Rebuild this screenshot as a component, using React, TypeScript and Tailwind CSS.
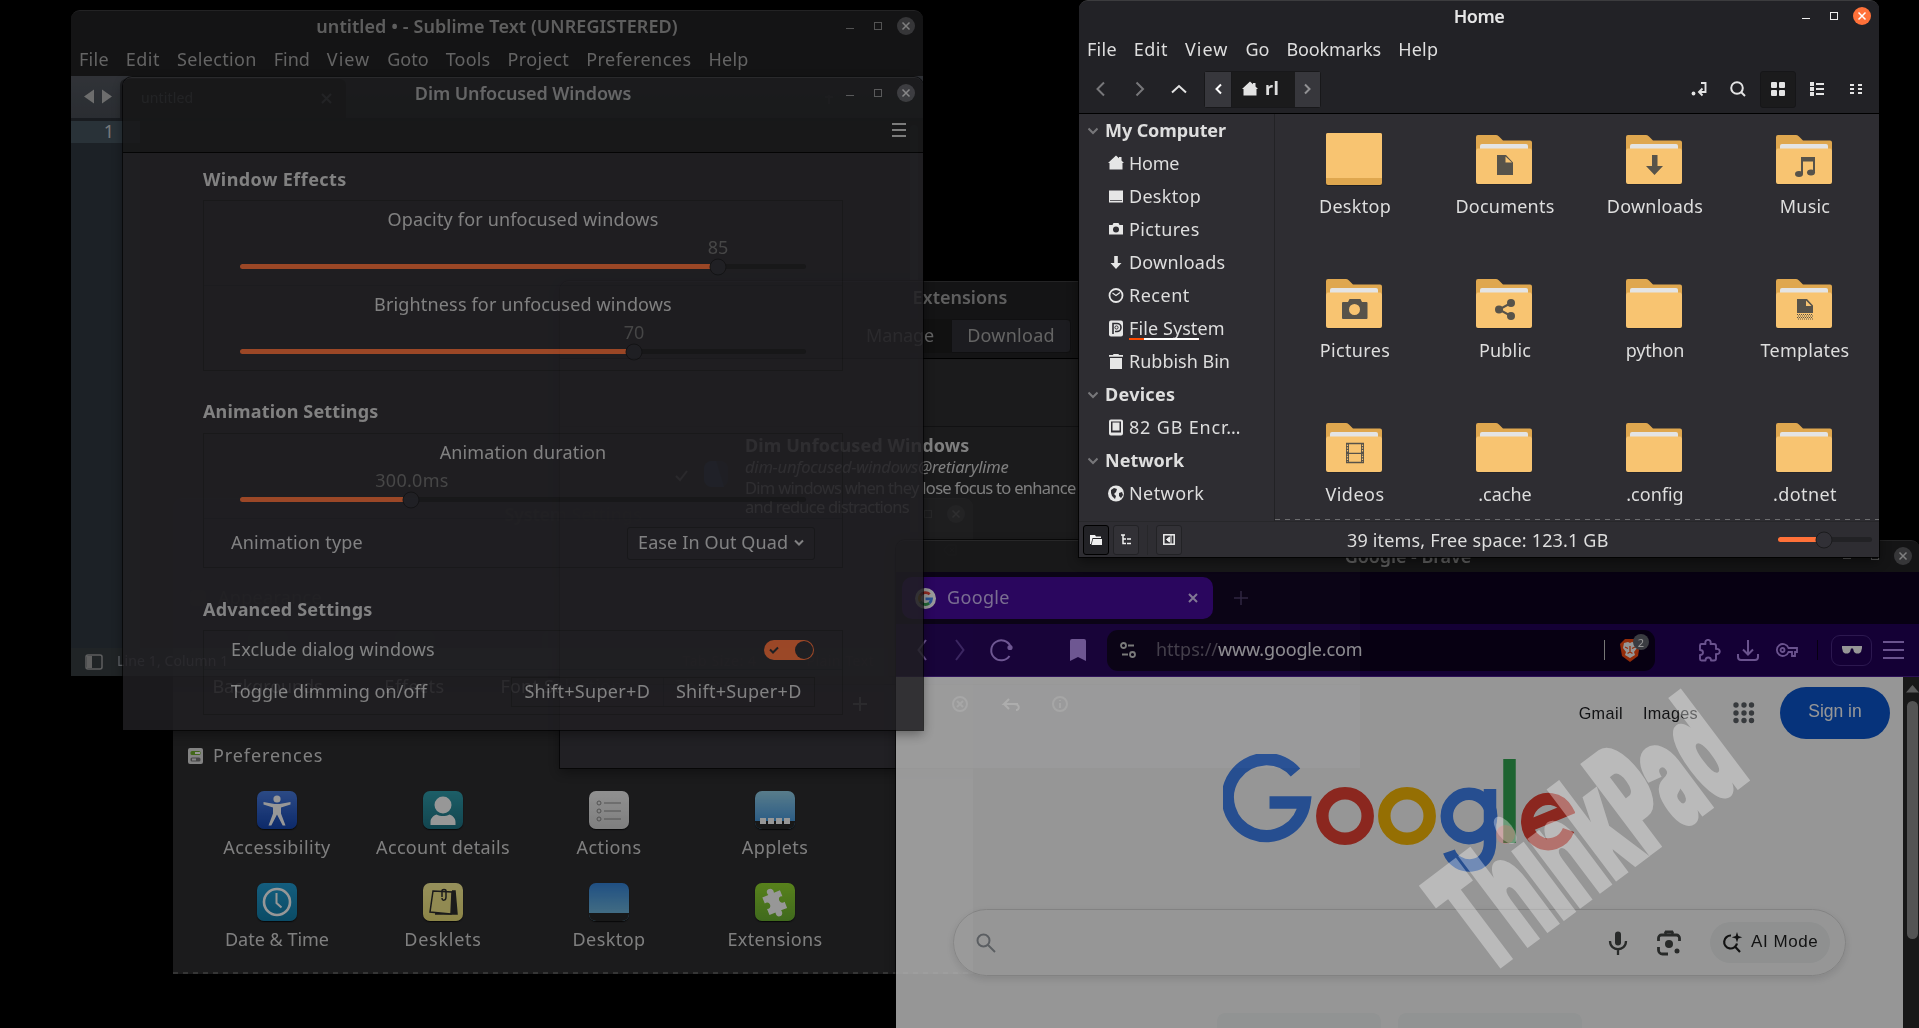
import React, { useLayoutEffect, useRef, useState } from "react";

/* Text that is tracked so that it fills a given width. */
function T({ w, className = "", children }: { w?: number; className?: string; children: string }) {
  const ref = useRef<HTMLSpanElement>(null);
  const [sp, setSp] = useState(0);
  useLayoutEffect(() => {
    if (!ref.current || !w) return;
    const natural = ref.current.offsetWidth;
    setSp((w - natural) / children.length);
  }, [w, children]);
  const lift = className.includes("leading") ? "" : "-translate-y-px ";
  return (
    <span ref={ref} style={{ letterSpacing: sp }} className={"inline-block shrink-0 whitespace-nowrap " + lift + className}>
      {children}
    </span>
  );
}

function TitleBar({ title, w, active = false }: { title: string; w: number; active?: boolean }) {
  return (
    <div className="relative flex h-[33px] shrink-0 items-center justify-center pb-[2px]">
      <T w={w} className={active ? "font-semibold text-[#e6e6e6]" : "font-semibold text-[#a0a0a0]"}>
        {title}
      </T>
      <div className={"absolute right-2 top-[6px] flex gap-[10px] " + (active ? "text-[#eeeeee]" : "text-[#8c8c8c]")}>
        <svg width="18" height="18"><path d="M5 11.5h8" stroke="currentColor" /></svg>
        <svg width="18" height="18"><rect x="5.5" y="5.5" width="7" height="7" fill="none" stroke="currentColor" /></svg>
        <svg width="18" height="18">
          <circle cx="9" cy="9" r="9" className={active ? "fill-[#ff7139]" : "fill-[#5c5c60]"} />
          <path d="M5.5 5.5l7 7M12.500 5.5l-7 7" className={active ? "stroke-white" : "stroke-[#d8d8d8]"} strokeWidth="1.5" />
        </svg>
      </div>
    </div>
  );
}

const frame =
  "absolute flex flex-col overflow-hidden rounded-t-[9px] border-t border-[#3c3c3e] shadow-[0_0_0_1px_rgba(0,0,0,0.8),0_4px_12px_rgba(0,0,0,0.45)] ";
const dim = "opacity-85 brightness-[.7] ";

/* ---------- System settings ---------- */

function Tile({ className, children }: { className: string; children?: React.ReactNode }) {
  return (
    <div className={"flex size-10 items-center justify-center overflow-hidden rounded-[7px] shadow-[0_1px_1px_rgba(0,0,0,0.7)] " + className}>
      {children}
    </div>
  );
}

const prefs: { label: string; w: number; icon: React.ReactNode }[] = [
  {
    label: "Accessibility", w: 108,
    icon: (
      <Tile className="bg-linear-to-b from-[#4a7de0] to-[#1546b2]">
        <svg width="40" height="40" fill="#fff">
          <circle cx="20" cy="9" r="3.6" />
          <path d="M6.500 12l11 2h5l11-2v2.600l-9.500 3v6l4.500 12h-2.800L20 24.500l-5.700 11.100h-2.800l4.500-12v-6l-9.500-3z" />
        </svg>
      </Tile>
    ),
  },
  {
    label: "Account details", w: 134,
    icon: (
      <Tile className="bg-linear-to-b from-[#31a0ae] to-[#1f7485]">
        <svg width="40" height="40" fill="#fff">
          <ellipse cx="20" cy="15" rx="8.500" ry="8.500" />
          <path d="M7.500 35v-3c0-4 3-6.500 6-7.500 4 2 9 2 13 0 3 1 6 3.500 6 7.500v3z" />
        </svg>
      </Tile>
    ),
  },
  {
    label: "Actions", w: 65,
    icon: (
      <Tile className="bg-linear-to-b from-[#f2f2f2] to-[#d6d6d6]">
        <svg width="40" height="40" fill="none" stroke="#8a8a8a">
          <circle cx="10" cy="13" r="2" /><circle cx="10" cy="21" r="2" /><circle cx="10" cy="29" r="2" />
          <path d="M15 13h17M15 21h17M15 29h17" />
        </svg>
      </Tile>
    ),
  },
  {
    label: "Applets", w: 67,
    icon: (
      <Tile className="bg-linear-to-b from-[#95d2ea] via-[#4f9fe0] via-75% to-[#4a96dc]">
        <svg width="40" height="40">
          <path d="M0 31h40v9H0z" fill="#2a2a2a" />
          <path d="M5 28h6v6H5zM13 28h6v6h-6zM21 28h6v6h-6zM29 28h6v6h-6z" fill="#fff" />
        </svg>
      </Tile>
    ),
  },
  {
    label: "Date & Time", w: 104,
    icon: (
      <Tile className="bg-linear-to-b from-[#229ed4] to-[#137fab]">
        <svg width="40" height="40" fill="none" stroke="#fff">
          <circle cx="20" cy="20" r="13" strokeWidth="2.600" /><path d="M19.500 11v10l5 4.500" strokeWidth="2" />
        </svg>
      </Tile>
    ),
  },
  {
    label: "Desklets", w: 77,
    icon: (
      <Tile className="bg-linear-to-b from-[#fdf49a] to-[#ece078]">
        <svg width="40" height="40" fill="none" stroke="#2e2e2e" strokeWidth="1.500">
          <path d="M29 9h3l2 23H12" fill="#2e2e2e" />
          <path d="M10 9l19 1-1 22-21-2z" fill="#f4e98a" /><path d="M19 15V9c0-2 4-2 4 0v6c0 4-4 4-4 1" />
        </svg>
      </Tile>
    ),
  },
  {
    label: "Desktop", w: 73,
    icon: (
      <Tile className="bg-linear-to-b from-[#3686dc] via-[#6cb4dc] via-75% to-[#6cb4dc]">
        <svg width="40" height="40"><path d="M0 31h40v9H0z" fill="#2a2a2a" /></svg>
      </Tile>
    ),
  },
  {
    label: "Extensions", w: 95,
    icon: (
      <Tile className="bg-linear-to-b from-[#94da2e] to-[#6cb232]">
        <svg width="40" height="40" fill="#fff">
          <g transform="rotate(-22 20 20)">
            <path d="M10 11h6.500c-3-7 8-7 6 0H29v6.500c-6-3-6 8 0 6V30h-6.500c2 7-8 7-6 0H10v-6.500c6 2 6-8 0-6z" />
          </g>
        </svg>
      </Tile>
    ),
  },
];

function SettingsWindow() {
  return (
    <div className={frame + dim + "left-[173px] top-[498px] h-[476px] w-[800px] bg-[#2d2d2f] text-[#d6d6d6]"}>
      <div className="flex h-[78px] shrink-0 flex-col bg-[#242427]">
        <TitleBar title="System Settings" w={137} />
        <div className="flex justify-end pr-4 pt-3 text-[#8c8c8c]">
          <svg width="14" height="12" fill="none" stroke="currentColor"><path d="M5 1h8v10H5L1 6zM7 4l4 4M11 4L7 8" /></svg>
        </div>
      </div>
      <div className="flex h-[42px] shrink-0 items-center gap-3 pl-[17px]">
        <div className="size-4 rounded-sm bg-[#444]" />
        <T w={104}>Appearance</T>
      </div>
      <div className="flex h-[112px] shrink-0 pl-[21px] pt-3">
        {[["Backgrounds", 110], ["Effects", 60], ["Font Selection", 122], ["Themes", 66]].map(([l, w]) => (
          <div key={l} className="flex w-[147px] shrink-0 flex-col items-center gap-1">
            <div className="size-10 rounded-[7px] bg-[#3c4044]" />
            <T w={w as number} className="leading-[22px]">{l as string}</T>
          </div>
        ))}
      </div>
      <div className="flex h-[50px] shrink-0 items-center gap-[10px] pl-[15px]">
        <svg width="15" height="16">
          <rect width="15" height="16" rx="2" fill="#dcdcdc" />
          <rect x="2.500" y="3" width="10" height="4" rx="1.500" fill="#6fae2c" /><rect x="7" y="4" width="5" height="2" fill="#fff" />
          <rect x="2.500" y="9.500" width="10" height="4" rx="1.500" fill="#777" /><rect x="4" y="10.500" width="4" height="2" fill="#ddd" />
        </svg>
        <T w={110}>Preferences</T>
      </div>
      <div className="grid grid-cols-[repeat(4,166px)] gap-y-[24px] pl-[21px] pt-[10px]">
        {prefs.map((p) => (
          <div key={p.label} className="flex h-[68px] flex-col items-center">
            {p.icon}
            <T w={p.w} className="mt-[6px] leading-[24px]">{p.label}</T>
          </div>
        ))}
      </div>
      <div className="mt-auto h-[2px] shrink-0 bg-[repeating-linear-gradient(90deg,#5a5a5a_0_5px,transparent_5px_10px)]" />
    </div>
  );
}

/* ---------- Extensions ---------- */

function ExtensionsWindow() {
  return (
    <div className={frame + dim + "left-[560px] top-[281px] h-[487px] w-[800px] bg-[#323137] text-[#d6d6d6]"}>
      <div className="flex h-[77px] shrink-0 flex-col border-b border-black bg-[#222224]">
        <TitleBar title="Extensions" w={95} />
        <div className="flex justify-center pt-[4px] text-[#a8a8a8]">
          <div className="flex h-[34px] w-[102px] items-center justify-center bg-[#1c1c1e]"><T w={68}>Manage</T></div>
          <div className="flex h-[34px] w-[120px] items-center justify-center rounded-r border border-[#1b1b1c] bg-[#313036]"><T w={88}>Download</T></div>
        </div>
      </div>
      <div className="flex h-[326px] shrink-0 flex-col border-b border-[#1d1d20] bg-[#2d2d2f]">
        <div className="h-[68px] shrink-0 border-b border-[#1d1d20]" />
        <div className="flex items-start pl-[114px] pt-[6px]">
          <svg width="16" height="14" className="mt-[36px]" fill="none" stroke="#a0a0a0" strokeWidth="2"><path d="M2 7l4 4 7-9" /></svg>
          <svg width="26" height="26" className="ml-[14px] mt-[28px]">
            <rect width="24" height="26" rx="8" fill="#2c3b50" /><path d="M8 0h4l8 26H8a8 8 0 01-8-8V8a8 8 0 018-8z" fill="#33507a" />
          </svg>
          <div className="ml-[15px] flex w-[420px] flex-col text-[16.500px]">
            <T w={224} className="self-start text-[18px] font-bold leading-[24px]">Dim Unfocused Windows</T>
            <T w={264} className="self-start italic leading-[19px]">dim-unfocused-windows@retiarylime</T>
            <T w={331} className="mt-[2px] self-start leading-[19px]">Dim windows when they lose focus to enhance</T>
            <T w={164} className="self-start leading-[19px]">and reduce distractions</T>
          </div>
        </div>
      </div>
      <div className="flex h-[38px] shrink-0 items-center pl-[290px] text-[#b4b4b4]">
        <svg width="250" height="24" fill="none" stroke="currentColor" strokeWidth="2">
          <path d="M3 12h14M10 5v14" />
          <circle cx="110" cy="12" r="7" /><path d="M107 9l6 6M113 9l-6 6" />
          <path d="M168 12h-14l5-5M154 12l5 5M164 12c6 0 6 6 2 6" stroke="#fff" />
          <circle cx="210" cy="12" r="7" /><path d="M210 8v1M210 11v5" />
        </svg>
      </div>
    </div>
  );
}

/* ---------- Sublime Text ---------- */

const subMenu: [string, number][] = [
  ["File", 30], ["Edit", 34], ["Selection", 80], ["Find", 36], ["View", 43], ["Goto", 41], ["Tools", 45], ["Project", 62], ["Preferences", 105], ["Help", 40],
];

function SublimeWindow() {
  return (
    <div className={frame + dim + "left-[71px] top-[10px] h-[666px] w-[852px] bg-[#222224] text-[#a8a8a8]"}>
      <TitleBar title="untitled • - Sublime Text (UNREGISTERED)" w={361} />
      <div className="flex h-[32px] shrink-0 items-center gap-[17px] pl-2">
        {subMenu.map(([l, w]) => <T key={l} w={w}>{l}</T>)}
      </div>
      <div className="flex h-[42px] shrink-0 bg-linear-to-b from-[#52565e] to-[#484d55]">
        <svg width="49" height="42" fill="#b8b8b8"><path d="M23 13.500v14L13 20.500zM31 13.500v14l10-7z" /></svg>
        <div className="mt-[3px] flex w-[226px] items-center justify-between rounded-t-md bg-[#303236] pl-[21px] pr-[14px] text-[#a6acb4]">
          <T w={52} className="text-[14px]">untitled</T>
          <svg width="11" height="11" stroke="currentColor" strokeWidth="2"><path d="M1 1l9 9M10 1l-9 9" /></svg>
        </div>
        <svg width="12" height="12" className="ml-auto mr-[88px] mt-4" stroke="#6a6e74" strokeWidth="2"><path d="M6 3v9M2 5h8" /></svg>
      </div>
      <div className="flex grow border-t-[3px] border-[#2b3036] bg-[#2f3035]">
        <div className="w-[69px] bg-[#303841]">
          <div className="h-[22px] bg-[#465460] pr-[26px] text-right leading-[21px] text-[#c8ccd0]">1</div>
        </div>
        <div className="ml-auto mr-[5px] mt-1 w-[8px] rounded bg-[#43474c]" />
      </div>
      <div className="flex h-[28px] shrink-0 items-center bg-[#363d42] pl-[14px] text-[14px] text-[#a6acb4]">
        <svg width="18" height="16"><rect x="1" y="1" width="16" height="14" rx="2" fill="none" stroke="#a0a0a0" strokeWidth="1.500" /><path d="M2 2h5v12H2z" fill="#a0a0a0" /></svg>
        <T w={112} className="ml-[14px]">Line 1, Column 1</T>
        <T w={74} className="ml-[454px]">Tab Size: 4</T>
        <T w={68} className="ml-[50px]">Plain Text</T>
      </div>
    </div>
  );
}

/* ---------- Dim Unfocused Windows ---------- */

function Knob({ className }: { className: string }) {
  return <div className={"absolute top-1/2 size-[17px] -translate-x-1/2 -translate-y-1/2 rounded-full border border-[#1b1b1d] bg-[#313036] " + className} />;
}

function SliderRow({ label, w, value, vw, pos, fill, knob }: { label: string; w: number; value: string; vw: number; pos: string; fill: string; knob: string }) {
  return (
    <div className="flex h-[84px] flex-col px-[36px] not-last:h-[85px]">
      <div className="flex h-[38px] items-center justify-center"><T w={w}>{label}</T></div>
      <div className={"flex h-[18px] w-[100px] items-center justify-center text-[#707070] " + pos}><T w={vw}>{value}</T></div>
      <div className="relative flex h-[19px] items-center">
        <div className="h-[5px] w-full rounded-full bg-[#222224]"><div className={"h-full rounded-l-full bg-[#ff7139] " + fill} /></div>
        <Knob className={knob} />
      </div>
    </div>
  );
}

const panel = "flex flex-col divide-y divide-[#29292d] border border-[#242427]";

function DimWindow() {
  return (
    <div className={frame + dim + "left-[123px] top-[77px] h-[653px] w-[800px] bg-[#2e2c32] text-[#d2d2d2]"}>
      <div className="flex h-[75px] shrink-0 flex-col border-b border-black bg-[#222224]">
        <TitleBar title="Dim Unfocused Windows" w={216} />
        <div className="flex justify-end pr-[17px] pt-[12px]">
          <svg width="14" height="14" stroke="#c8c8c8" strokeWidth="2"><path d="M0 1h14M0 7h14M0 13h14" /></svg>
        </div>
      </div>
      <div className="flex flex-col pl-[80px] pr-[80px]">
        <div className="flex h-[47px] items-center pt-[7px] font-bold"><T w={144}>Window Effects</T></div>
        <div className={panel}>
          <SliderRow label="Opacity for unfocused windows" w={271} value="85" vw={21} pos="ml-[428px]" fill="w-[84%]" knob="left-[478px]" />
          <SliderRow label="Brightness for unfocused windows" w={298} value="70" vw={21} pos="ml-[344px]" fill="w-[69%]" knob="left-[394px]" />
        </div>
        <div className="flex h-[62px] items-center pt-[20px] font-bold"><T w={175}>Animation Settings</T></div>
        <div className={panel}>
          <SliderRow label="Animation duration" w={167} value="300.0ms" vw={73} pos="ml-[122px]" fill="w-[30%]" knob="left-[171px]" />
          <div className="flex h-[48px] items-center justify-between pl-[27px] pr-[27px]">
            <T w={132}>Animation type</T>
            <div className="flex h-[33px] w-[188px] items-center justify-between rounded-[3px] border border-[#222224] bg-[#2f2e34] px-[10px]">
              <T w={150}>Ease In Out Quad</T>
              <svg width="10" height="8" fill="none" stroke="currentColor" strokeWidth="2"><path d="M1 1.500l4 4 4-4" /></svg>
            </div>
          </div>
        </div>
        <div className="flex h-[62px] items-center pt-[22px] font-bold"><T w={169}>Advanced Settings</T></div>
        <div className={panel}>
          <div className="flex h-[39px] items-center justify-between pl-[27px] pr-[28px]">
            <T w={204}>Exclude dialog windows</T>
            <div className="flex h-[20px] w-[50px] items-center justify-between rounded-full bg-[#ff7139] pl-[5px]">
              <svg width="10" height="8" fill="none" stroke="#2e2d33" strokeWidth="2"><path d="M1 3.500l3 3 5-5" /></svg>
              <div className="mr-px size-[18px] rounded-full bg-[#2e2d33]" />
            </div>
          </div>
          <div className="flex h-[44px] items-center justify-between px-[27px]">
            <T w={196}>Toggle dimming on/off</T>
            <div className="flex h-[30px] w-[304px] divide-x divide-[#29292d] border border-[#242427]">
              <div className="flex flex-1 items-center justify-center"><T w={126}>Shift+Super+D</T></div>
              <div className="flex flex-1 items-center justify-center"><T w={126}>Shift+Super+D</T></div>
            </div>
          </div>
        </div>
      </div>
    </div>
  );
}

/* ---------- Brave ---------- */

function GoogleG() {
  return (
    <svg width="21" height="21" viewBox="0 0 21 21" fill="none" strokeWidth="2.800">
      <circle cx="10.500" cy="10.500" r="10.500" fill="#fff" />
      <path d="M14.700 6.300A6 6 0 005.300 7.500" stroke="#ea4335" />
      <path d="M5.300 7.500a6 6 0 000 6" stroke="#fbbc05" />
      <path d="M5.300 13.500a6 6 0 009 1.600" stroke="#34a853" />
      <path d="M14.300 15.100a6 6 0 002.200-4.300H10.500" stroke="#4285f4" />
    </svg>
  );
}

function GoogleLogo() {
  return (
    <svg width="352" height="118" viewBox="1222 754 352 118" fill="none" strokeWidth="12.500" className="mx-auto shrink-0" role="img" aria-label="Google">
      <path d="M1294.500 772.500A38.500 38.500 0 101303.500 802.500H1268.500" stroke="#4285f4" />
      <circle cx="1344" cy="816" r="22.700" stroke="#ea4335" />
      <circle cx="1406" cy="816" r="22.700" stroke="#fbbc05" />
      <path d="M1489 789v53c0 30-34 29-41 9.500" stroke="#4285f4" />
      <circle cx="1468" cy="816" r="22.200" stroke="#4285f4" />
      <path d="M1508.500 759v84" stroke="#34a853" />
      <path d="M1531 824.500L1566 810A21.500 22.700 0 101567.500 830" stroke="#ea4335" strokeWidth="12" />
    </svg>
  );
}

function BraveWindow() {
  return (
    <div className={frame + dim + "left-[896px] top-[540px] h-[488px] w-[1024px] bg-[#222224]"}>
      <div className="h-[31px] shrink-0"><TitleBar title="Google - Brave" w={127} /></div>
      <div className="flex h-[52px] shrink-0 items-center bg-[#0d001f] pl-[6px] text-[#b9a0e8]">
        <div className="flex h-[42px] w-[311px] items-center rounded-[10px] bg-[#420499] pl-[13px] pr-[15px]">
          <GoogleG />
          <T w={63} className="ml-[11px] mr-auto text-[#c8b4ee]">Google</T>
          <svg width="10" height="10" stroke="#d4c4f4" strokeWidth="2"><path d="M1 1l8 8M9 1L1 9" /></svg>
        </div>
        <svg width="14" height="14" className="ml-[21px]" stroke="#4a3a68" strokeWidth="1.500"><path d="M7 0v14M0 7h14" /></svg>
      </div>
      <div className="flex h-[53px] shrink-0 items-center border-b border-[#4a1b90] bg-[#22005a] text-[#b48cf0]">
        <svg width="104" height="24" className="ml-[20px]" fill="none" stroke="currentColor" strokeWidth="2">
          <path d="M10 2L2.500 12l7.500 10" />
          <path d="M40 2l7.500 10-7.500 10" stroke="#5e3a9c" />
          <path d="M94.500 8.500A10 10 0 1093.500 18" /><circle cx="94" cy="9.500" r="2.600" fill="currentColor" stroke="none" />
        </svg>
        <svg width="16" height="22" className="ml-[50px]" fill="currentColor"><path d="M0 2a2 2 0 012-2h12a2 2 0 012 2v20l-8-4-8 4z" /></svg>
        <div className="ml-[21px] flex h-[41px] w-[548px] items-center rounded-[11px] bg-[#0d001f] pl-[13px]">
          <svg width="16" height="16" fill="none" stroke="#c8c8c8" strokeWidth="1.800">
            <circle cx="3.500" cy="3.500" r="2.500" /><path d="M8 3.500h6M2 12.500h6" /><circle cx="12.500" cy="12.500" r="2.500" />
          </svg>
          <T w={62} className="ml-[20px] text-[#6c6478]">https://</T>
          <T w={144} className="text-[#e8e6ee]">www.google.com</T>
          <div className="ml-auto h-5 w-px bg-[#c8c8c8]" />
          <div className="relative ml-[15px] mr-[15px]">
            <svg width="20" height="24" viewBox="0 0 20 24">
              <path d="M5 1h10l3 3 2 2-2 12-8 6-8-6L0 6l2-2z" fill="#fb4b10" />
              <path d="M4 5l4-1 2 1 2-1 4 1 1 5-3 4 1 3-5 3-5-3 1-3-3-4z" fill="#fff" />
              <path d="M5 9l3 1.500M15 9l-3 1.500M10 8v6M7.500 15.500l2.500-1.500 2.500 1.500" stroke="#fb4b10" strokeWidth="1.300" fill="none" />
            </svg>
            <div className="absolute -top-1 left-[13px] flex size-4 items-center justify-center rounded-full bg-[#62666e] text-[11px] leading-none text-white">2</div>
          </div>
        </div>
        <svg width="23" height="23" className="ml-[43px]" fill="none" stroke="currentColor" strokeWidth="1.900" strokeLinejoin="round">
          <path d="M2 6.500A1.500 1.500 0 013.500 5h4c-1.500-5.500 6.500-5.500 5 0H16a2 2 0 012 2v3c5-1 5 6 0 5v4.500a2 2 0 01-2 2h-3c0-4-5.500-4-5.500 0h-4A1.500 1.500 0 012 20v-4c4 0 4-5 0-5z" />
        </svg>
        <svg width="22" height="22" className="ml-[16px]" fill="none" stroke="currentColor" strokeWidth="2"><path d="M11 1v14M6 10.500l5 5 5-5M1 15v3a3 3 0 003 3h14a3 3 0 003-3v-3" /></svg>
        <svg width="24" height="16" className="ml-[16px]" fill="none" stroke="currentColor" strokeWidth="1.800">
          <path d="M13.500 6H22v4h-2v4h-3v-4h-3.500a6 6 0 110-4z" /><circle cx="7.500" cy="8" r="2" />
        </svg>
        <div className="ml-[18px] h-5 w-px bg-[#0d001f]" />
        <div className="ml-[13px] flex h-[31px] w-[41px] items-center justify-center rounded-[9px] border border-[#4a2a86]">
          <svg width="20" height="8" fill="#fff"><path d="M0 0h20v2l-1 4-2 1.500h-3L12 6l-1-3.500H9L8 6 6 7.500H3L1 6 0 2z" /></svg>
        </div>
        <svg width="21" height="18" className="ml-[11px]" stroke="currentColor" strokeWidth="2"><path d="M0 1h21M0 9h21M0 17h21" /></svg>
      </div>
      <div className="flex grow overflow-hidden bg-[#2a2a2a]">
        <div className="flex w-[1007px] shrink-0 flex-col bg-white font-['Liberation_Sans',Arial,sans-serif] text-[16.200px] text-[#202124]">
          <div className="flex h-[72px] shrink-0 items-center justify-end pr-[13px]">
            <T w={44} className="pt-[2px]">Gmail</T>
            <T w={55} className="ml-[20px] pt-[2px]">Images</T>
            <svg width="22" height="22" className="ml-[35px] mr-[25px]" fill="#5f6368">
              {[3, 11, 18.500].map((y) => [3, 11, 18.500].map((x) => <circle key={x + "-" + y} cx={x} cy={y} r="2.700" />))}
            </svg>
            <div className="flex h-[52px] w-[110px] items-center justify-center rounded-full bg-[#0b57d0] pb-px text-[17.500px] text-white"><T w={54}>Sign in</T></div>
          </div>
          <div className="flex shrink-0 justify-center pr-px pt-[5px]"><div className="w-[352px]"><GoogleLogo /></div></div>
          <div className="ml-[57px] mt-[37px] flex h-[67px] w-[893px] shrink-0 items-center rounded-full border border-[#dcdcdc] pl-[22px] pr-[15px] shadow-[0_3px_10px_rgba(60,64,67,0.16)]">
            <svg width="20" height="20" fill="none" stroke="#9aa0a6" strokeWidth="2"><circle cx="7.500" cy="7.500" r="6" /><path d="M12 12l7 7" /></svg>
            <svg width="20" height="26" className="ml-auto" fill="none" stroke="#444746" strokeWidth="2.300">
              <rect x="7" y="1.500" width="6" height="14" rx="3" fill="#444746" stroke="none" /><path d="M2 11c0 11 16 11 16 0M10 19v6" />
            </svg>
            <svg width="26" height="26" className="ml-[28px]" fill="none" stroke="#444746" strokeWidth="2.800">
              <path d="M2.500 11V8a3 3 0 013-3h15a3 3 0 013 3v3M2.500 17v3a4 4 0 004 4H12" /><circle cx="13" cy="14" r="4" fill="#444746" stroke="none" />
              <circle cx="21" cy="21" r="2.500" fill="#444746" stroke="none" /><path d="M9 4l1-2h6l1 2" />
            </svg>
            <div className="ml-[28px] flex h-[41px] w-[120px] items-center rounded-full bg-[#f1f4f4] pl-[11px] text-[17px] text-[#1f1f1f]">
              <svg width="22" height="22" fill="none" stroke="#1f1f1f" strokeWidth="2.200">
                <path d="M10 3.500a6.500 6.500 0 106 8M13.500 14l5.500 6" /><path d="M16 0l1.300 4 4 1.300-4 1.300L16 10.500l-1.300-3.900-4-1.300 4-1.300z" fill="#1f1f1f" stroke="none" />
              </svg>
              <T w={67} className="ml-[8px]">AI Mode</T>
            </div>
          </div>
          <div className="flex shrink-0 gap-[17px] pl-[321px] pt-[37px] text-[16px] leading-[44px]">
            <div className="h-[44px] w-[164px] rounded-lg bg-[#f6f8f8] text-center">Google Search</div>
            <div className="h-[44px] w-[184px] rounded-lg bg-[#f6f8f8] text-center">I'm Feeling Lucky</div>
          </div>
        </div>
        <div className="flex w-4 flex-col items-center pl-[2px]">
          <svg width="13" height="8" className="mt-2" fill="#9c9c9c"><path d="M6.500 0l6.500 7.500H0z" /></svg>
          <div className="mt-2 h-[238px] w-[11px] rounded-full bg-[#8f8f8f]" />
        </div>
      </div>
    </div>
  );
}

/* ---------- Home (file manager) ---------- */

const icoHome = <path d="M8 .5l3 2.700V2h2.500v3.500L16 8h-1.500v6.500h-13V8H0z" />;
const sideIcons: Record<string, React.ReactNode> = {
  home: icoHome,
  desktop: <path fillRule="evenodd" d="M1 2.500h14v12H1zM2 12v.8h12V12z" />,
  camera: <path fillRule="evenodd" d="M1 4h3.500l1-2h5l1 2H15v9.500H1zM8 5.500a3 3 0 100 6 3 3 0 000-6z" />,
  down: <path d="M6.200 2h3.600v7H13.500L8 15 2.500 9h3.700z" />,
  clock: <g fill="none" stroke="currentColor" strokeWidth="1.800"><circle cx="8" cy="8.500" r="6.500" /><path d="M4.500 6L8 8.500l4-3" strokeWidth="1.200" /></g>,
  disk: (
    <g>
      <rect x="1" y=".5" width="14" height="16" rx="2" />
      <path d="M5 14V3.500h4a4 4 0 010 8H7" fill="none" stroke="#2e2d32" strokeWidth="1.600" />
      <circle cx="8.500" cy="7.500" r="1.600" fill="none" stroke="#2e2d32" strokeWidth="1" />
    </g>
  ),
  bin: <path d="M1 2h4l.5-1h5l.5 1h4v1.700H1zM2 5h12v11H2z" />,
  ssd: <path fillRule="evenodd" d="M3 .5h10a2 2 0 012 2v12a2 2 0 01-2 2H3a2 2 0 01-2-2v-12a2 2 0 012-2zM3 2.500v11h10v-11zM4.500 3.500v8h7v-8z" />,
  globe: <g><circle cx="8" cy="8.500" r="8" /><path d="M3 5l3-2 3 1-1 3 -2 2 2 2-1 3-3-3-1-3zM11 8l3-1 1 3-2 3-2-2z" fill="#2e2d32" /></g>,
};

const side: { t: string; w: number; icon?: string; head?: boolean; bar?: boolean }[] = [
  { t: "My Computer", w: 121, head: true },
  { t: "Home", w: 50, icon: "home" },
  { t: "Desktop", w: 72, icon: "desktop" },
  { t: "Pictures", w: 71, icon: "camera" },
  { t: "Downloads", w: 96, icon: "down" },
  { t: "Recent", w: 61, icon: "clock" },
  { t: "File System", w: 96, icon: "disk", bar: true },
  { t: "Rubbish Bin", w: 101, icon: "bin" },
  { t: "Devices", w: 70, head: true },
  { t: "82 GB Encr…", w: 112, icon: "ssd" },
  { t: "Network", w: 79, head: true },
  { t: "Network", w: 75, icon: "globe" },
];

const G = "#57534a";
const emblems: Record<string, React.ReactNode> = {
  doc: <path fillRule="evenodd" fill={G} d="M21 24h9l7 7.500V44H21zM29.500 25.500v6H36z" />,
  down: <path fill={G} d="M26 24h5.500v11H37l-8.500 9L20 35h6z" />,
  music: <g fill={G}><path d="M25 26h14v16h-2V30.500H27V43h-2z" /><ellipse cx="23" cy="43" rx="4" ry="3" /><ellipse cx="35" cy="41.500" rx="4" ry="3" /></g>,
  camera: <path fillRule="evenodd" fill={G} d="M17 27h5l1.500-3h11l1.500 3h4.500a1 1 0 011 1v15a1 1 0 01-1 1H17a1 1 0 01-1-1V28a1 1 0 011-1zM28.500 29a5.500 5.500 0 100 11 5.500 5.500 0 000-11z" />,
  share: <g fill={G}><circle cx="35" cy="28" r="4" /><circle cx="23" cy="34.500" r="4" /><circle cx="35" cy="41" r="4" /><path d="M35 28l-12 6.500L35 41" fill="none" stroke={G} strokeWidth="2" /></g>,
  tmpl: (
    <g fill={G}>
      <path fillRule="evenodd" d="M21 24h10l6 6.500V38H21zM30 25.500V31h5.500z" />
      <path d="M21 39.500h16M22 41h15M21 42.500h16M22 44h15" stroke={G} strokeWidth="1" strokeDasharray="1 1" />
    </g>
  ),
  film: (
    <g fill="none" stroke={G}>
      <path d="M21.500 24v20M36.500 24v20" strokeWidth="3" /><path d="M21.500 25.500v18M36.500 25.500v18" stroke="#f8c471" strokeWidth="1.200" strokeDasharray="1.500 1.300" />
      <path d="M20 24.500h18M20 43.500h18M20 34.300h18" strokeWidth="1.300" />
    </g>
  ),
};

function Folder({ emblem }: { emblem?: string }) {
  if (emblem === "desktop")
    return (
      <svg width="56" height="56">
        <rect y="3" width="56" height="52" rx="2" fill="#1f1f22" /><rect y="2" width="56" height="52" rx="2" fill="#dfa74f" />
        <path d="M2 2h52a2 2 0 012 2v43H0V4a2 2 0 012-2z" fill="#f8c471" />
      </svg>
    );
  return (
    <svg width="56" height="56">
      <path d="M2 4h18c2 0 3 1.500 4 2.500L27 9.500h27a2 2 0 012 2V30H0V6a2 2 0 012-2z" fill="#dfa74f" />
      <path d="M6 13h44a2 2 0 012 2v4H4v-4a2 2 0 012-2z" fill="#e4e4e4" />
      <path d="M2 18h52a2 2 0 012 2v32a2 2 0 01-2 2H2a2 2 0 01-2-2V20a2 2 0 012-2z" fill="#1f1f22" opacity=".5" />
      <path d="M2 17.500h52a2 2 0 012 2v31.500a2 2 0 01-2 2H2a2 2 0 01-2-2V19.500a2 2 0 012-2z" fill="#f8c471" />
      {emblem && emblems[emblem]}
    </svg>
  );
}

const files: [string, number, string?][] = [
  ["Desktop", 72, "desktop"], ["Documents", 99, "doc"], ["Downloads", 96, "down"], ["Music", 50, "music"],
  ["Pictures", 71, "camera"], ["Public", 52, "share"], ["python", 59], ["Templates", 89, "tmpl"],
  ["Videos", 59, "film"], [".cache", 53], [".config", 57], [".dotnet", 64],
];

const homeMenu: [string, number][] = [["File", 30], ["Edit", 34], ["View", 43], ["Go", 24], ["Bookmarks", 95], ["Help", 40]];

function HomeWindow() {
  return (
    <div className={frame + "left-[1079px] top-0 h-[557px] w-[800px] bg-[#2e2d32] text-[#dedede]"}>
      <div className="flex h-[113px] shrink-0 flex-col border-b border-black bg-[#222226]">
        <div className="h-[32px]"><TitleBar title="Home" w={51} active /></div>
        <div className="flex h-[34px] items-center gap-[17px] pl-2">{homeMenu.map(([l, w]) => <T key={l} w={w}>{l}</T>)}</div>
        <div className="flex h-[44px] items-center pl-[14px]">
          <svg width="96" height="16" fill="none" stroke="#77777a" strokeWidth="2">
            <path d="M11 1.500L4.500 8l6.500 6.500M43.500 1.500L50 8l-6.500 6.500" /><path d="M79 11.500L86 5l7 6.500" stroke="#e2e2e2" />
          </svg>
          <div className="ml-[15px] flex h-[37px] w-[117px] rounded-[3px] border border-[#18181a]">
            <div className="flex w-[27px] items-center justify-center border-r border-[#18181a] bg-[#37373c]">
              <svg width="7" height="12" fill="none" stroke="#fff" strokeWidth="2"><path d="M6 1.500L1.500 6 6 10.500" /></svg>
            </div>
            <div className="flex w-[63px] items-center gap-[7px] bg-[#1b1b1c] pl-[10px] font-bold">
              <svg width="16" height="16" fill="#e2e2e2">{icoHome}</svg>
              <T w={14}>rl</T>
            </div>
            <div className="flex grow items-center justify-center bg-[#37373c]">
              <svg width="7" height="12" fill="none" stroke="#929294" strokeWidth="2"><path d="M1 1.500L5.500 6 1 10.500" /></svg>
            </div>
          </div>
          <svg width="16" height="16" className="ml-auto" fill="none" stroke="#e4e4e4" strokeWidth="2.200">
            <path d="M10 2h4.500v9H9M11.500 7.500L8 11l3.500 3.500" strokeWidth="1.900" /><circle cx="2.500" cy="12.500" r="1.900" fill="#e4e4e4" stroke="none" />
          </svg>
          <svg width="16" height="16" className="ml-[23px]" fill="none" stroke="#e4e4e4" strokeWidth="2"><circle cx="7" cy="7" r="5.800" /><path d="M11 11l4 4" /></svg>
          <div className="ml-[14px] flex h-[37px] w-[36px] items-center justify-center rounded-[3px] border border-[#161618] bg-[#1b1b1c]">
            <svg width="14" height="14" fill="#e4e4e4"><rect width="6" height="6" rx="1" /><rect x="8" width="6" height="6" rx="1" /><rect y="8" width="6" height="6" rx="1" /><rect x="8" y="8" width="6" height="6" rx="1" /></svg>
          </div>
          <svg width="14" height="14" className="ml-[14px]" fill="#e4e4e4"><path d="M0 0h4v4H0zM0 5h4v4H0zM0 10h4v4H0zM6 1h8v2H6zM6 6h8v2H6zM6 11h8v2H6z" /></svg>
          <svg width="12" height="12" className="ml-[26px] mr-[17px]" fill="#e4e4e4"><path d="M0 1h4v2H0zM0 5h4v2H0zM0 9h4v2H0zM8 1h4v2H8zM8 5h4v2H8zM8 9h4v2H8z" /></svg>
        </div>
      </div>
      <div className="flex h-[408px] shrink-0 border-b border-[#27272a]">
        <div className="w-[196px] shrink-0 border-r border-[#222225]">
          {side.map((s, i) =>
            s.head ? (
              <div key={i} className="flex h-[33px] items-center pl-[9px] font-bold">
                <svg width="10" height="8" className="mr-[7px]" fill="none" stroke="#77777a" strokeWidth="2"><path d="M.5 1.500L5 6l4.500-4.500" /></svg>
                <T w={s.w}>{s.t}</T>
              </div>
            ) : (
              <div key={i} className="relative flex h-[33px] items-center pl-[29px]">
                <svg width="16" height="17" className="mr-[5px]" fill="#e6e6e6" color="#e6e6e6">{sideIcons[s.icon!]}</svg>
                <T w={s.w}>{s.t}</T>
                {s.bar && <div className="absolute left-[50px] top-[26px] flex h-[2px] w-[70px] bg-white"><div className="w-[15px] bg-[#ff4a00]" /></div>}
              </div>
            )
          )}
        </div>
        <div className="relative flex grow flex-col overflow-hidden">
          <div className="grid grid-cols-[repeat(4,150px)] pl-[4px]">
            {files.map(([l, w, e]) => (
              <div key={l} className="flex h-[144px] flex-col items-center pt-[17px]">
                <Folder emblem={e} />
                <T w={w} className="ml-[2px] mt-[7px] leading-[24px]">{l}</T>
              </div>
            ))}
          </div>
          <div className="absolute inset-x-0 bottom-px h-px bg-[repeating-linear-gradient(90deg,#6c6c6e_0_5px,transparent_5px_10px)]" />
        </div>
      </div>
      <div className="flex grow items-center pl-1 pr-[7px]">
        <div className="flex h-[30px] w-[26px] items-center justify-center rounded-[3px] border border-black bg-[#222226]">
          <svg width="12" height="10" fill="#f0f0f0"><path d="M0 0h5l1 1.500h5V3H2.500L1 9H0zM3 4h9v6H1.500z" /></svg>
        </div>
        <div className="ml-1 flex h-[30px] w-[26px] items-center justify-center rounded-[3px] border border-[#222225] bg-[#323136]">
          <svg width="11" height="11" fill="none" stroke="#f0f0f0" strokeWidth="1.500"><path d="M0 1h4M2 1v8.500h3M2 5h3M6 5h4M6 9.500h4" /></svg>
        </div>
        <div className="ml-2 h-[30px] w-px bg-[#27272a]" />
        <div className="ml-2 flex h-[30px] w-[26px] items-center justify-center rounded-[3px] border border-[#222225] bg-[#323136]">
          <svg width="12" height="11" fill="none" stroke="#f0f0f0" strokeWidth="1.500"><rect x=".8" y=".8" width="10.400" height="9.400" /><path d="M6.500 3v5L3.500 5.500zM8 1v9" fill="#f0f0f0" strokeWidth="1" /></svg>
        </div>
        <div className="ml-[165px]"><T w={262} className="leading-[20px]">39 items, Free space: 123.1 GB</T></div>
        <div className="relative ml-auto flex w-[94px] items-center">
          <div className="h-[5px] w-full rounded-full bg-[#222225]"><div className="h-full w-[40px] rounded-l-full bg-[#ff7139]" /></div>
          <Knob className="left-[46px]" />
        </div>
      </div>
    </div>
  );
}

export default function App() {
  return (
    <div className="relative h-[1028px] w-[1919px] overflow-hidden bg-black font-['Noto_Sans','Open_Sans',sans-serif] text-[18px] leading-none">
      <SettingsWindow />
      <SublimeWindow />
      <ExtensionsWindow />
      <BraveWindow />
      <DimWindow />
      <HomeWindow />
      <div className="absolute left-[1420px] top-[889px] h-[111px] w-[332px] origin-top-left -rotate-[37deg] text-white opacity-35">
        <div className="w-[760px] origin-top-left scale-x-[.46] font-['Inter',sans-serif] text-[153px] font-black leading-[111px] [-webkit-text-stroke:4px_white]">
          <T w={720}>ThinkPad</T>
        </div>
      </div>
      <div className="absolute left-[1496px] top-[825px] size-[19px] rounded-full bg-[#ff6a6a] opacity-25" />
    </div>
  );
}
